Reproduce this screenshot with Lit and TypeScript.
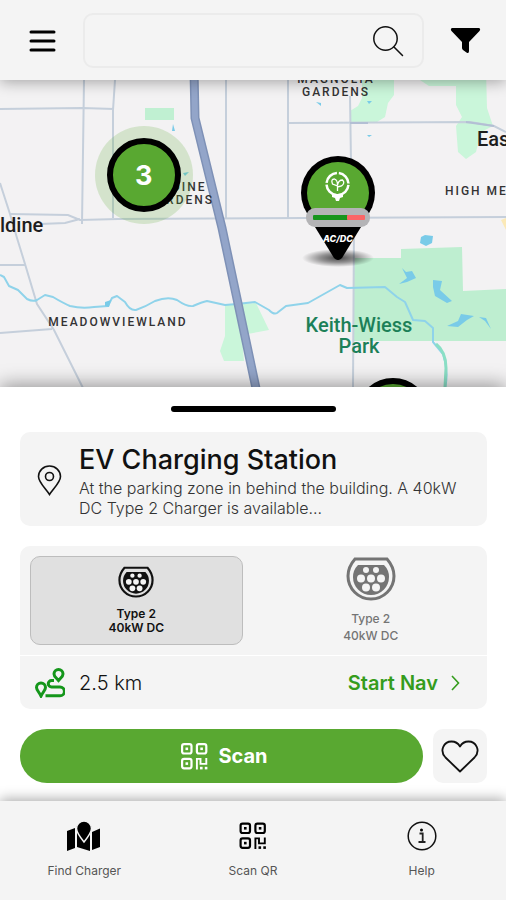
import { LitElement, html, svg, css } from "lit";
import { customElement, property, state } from "lit/decorators.js";

const qrIcon = svg`
  <g fill="none" stroke="currentColor" stroke-width="2.2">
    <rect x="1.1" y="1.1" width="9.4" height="9.4" rx="2"/>
    <rect x="15.9" y="1.1" width="9.4" height="9.4" rx="2"/>
    <rect x="1.1" y="15.9" width="9.4" height="9.4" rx="2"/>
    <path d="M15.9 26.4V15.9h3.600v5h5.800v-6" stroke-width="1.900"/>
  </g>
  <g fill="currentColor">
    <rect x="4.5" y="4.5" width="2.6" height="2.6"/>
    <rect x="19.3" y="4.5" width="2.6" height="2.6"/>
    <rect x="4.5" y="19.3" width="2.6" height="2.6"/>
    <rect x="19" y="23.8" width="2.6" height="2.6"/>
    <rect x="23.8" y="23.8" width="2.6" height="2.6"/>
  </g>`;

@customElement("map-view")
class MapView extends LitElement {
  static styles = css`
    :host { display: block; position: relative; overflow: hidden; background: #f3f2f3; }
    .map { display: block; width: 100%; height: 100%; }
    .place { font-family: Roboto, "Liberation Sans", sans-serif; font-weight: 500; fill: #333; text-anchor: middle; }
    .area { font-size: 12px; letter-spacing: 2px; }
    .town { font-size: 20px; fill: #1d1d1d; }
    .park { font-size: 20px; fill: #1c8058; }
    .start { text-anchor: start; }
    .pin {
      position: absolute; transform: translate(-50%, -50%);
      border: 0; padding: 0; background: none; cursor: pointer; line-height: 0;
    }
    .cluster { display: grid; place-items: center; width: 98px; height: 98px; border-radius: 50%; background: #59a83133; }
    .disc {
      display: grid; place-items: center; box-sizing: border-box; width: 74px; height: 74px;
      border: 6px solid #000; border-radius: 50%; background: #59a831; color: #fff;
      font: 700 27px/27px Inter, sans-serif;
    }
    .tag { font: italic 800 9px Inter, sans-serif; fill: #fff; text-anchor: middle; }
  `;

  render() {
    return html`
      <svg class="map" viewBox="0 80 506 307" preserveAspectRatio="xMidYMid slice" role="img" aria-label="Map">
        <defs>
          <radialGradient id="ground"><stop offset="0" stop-opacity=".7"/><stop offset=".5" stop-opacity=".4"/><stop offset="1" stop-opacity="0"/></radialGradient>
        </defs>
        <g fill="#caf6da">
          <path fill="#c0f0d2" d="M145 108h29v12h-29z"/>
          <path d="M362 60h32v35l-6 8-3 14-8 5h-27v-11l8-5 4-8z"/>
          <path d="M405 70h81l1 38 6 18-12 6-5 20-10 7-8-7-2-26 6-9-6-12v-19h-27z"/>
          <path d="M225 305l31-2 13 27-27 5 2 26h-20l-4-10 5-15z"/>
        </g>
        <path fill="#beeed0" d="M354 258h47v-9l61-2 1 44 43-2v52H354z"/>
        <g fill="none" stroke="#c5cfdb" stroke-width="2">
          <path d="M84 80l-2 144M115 80l-2 30v108M0 109l82-1 32 1M226 80v138"/>
          <path d="M10 214l58 1 12 5 38-1 388-2M40 224l25-1 15-4"/>
          <path d="M0 183l10 31 7 24 8 26 12 40 17 26 29 58M0 265h25M0 333l52-4"/>
          <path d="M288 80v138M350 96l1 66M354 225l-1 162M288 123l182-1 24 4 12 6"/>
        </g>
        <path fill="none" stroke="#b3bfd4" stroke-width="2" d="M350 123h18M466 122l28 4"/>
        <path fill="none" stroke="#8fd3ea" stroke-width="2" stroke-linejoin="round" d="M0 275l4 2 5 9 9 4 9 9q6 3 10 1l8-5 8 2q10 6 17 9 12 3 24 1l14-1 4-8 5-2 8 6q5 9 11 8 9-3 19-9 13-5 22-1 10 7 16 6 9-4 14-5l18 4 12-1 18-2 14 8q5 5 8 3l9-7 22-3 32-18 7 3 38-1 12 10 8 5 8 18 12 1 8 7v14l10 12q6 17 2 34"/>
        <path fill="none" stroke="#8adfc5" stroke-width="3" d="M436 344q10 8 10 24l-1 19"/>
        <g fill="#79cbe8">
          <path d="M421 237l4-2 8 1-1 7-6 3-6-3zM402 268l4 4 6-1 4 7-9 4-8 2 8-6zM433 280l9 1-2 9 12 11-5 2-12-7-2-9zM447 326l11-5 3-7 13 2-7 4-9 7zM479 317l7 1 5 11-6-8zM105 302l6-2-2 7-4-1zM173 124l2 7h-3zM183 173l6-1-4 4zM316 102l5 1v3zM367 101h5l-3 3zM367 135h5l-3 2z"/>
        </g>
        <g fill="none" stroke="#7e91b6" stroke-width="9">
          <path d="M194 70l1 48 27 110 35 165"/>
          <path stroke="#93a5c9" stroke-width="6" d="M194 70l1 48 27 110 35 165"/>
        </g>
        <path fill="#fbe9b7" d="M501 220l5-2v12z"/>
        <text class="place area" x="336" y="83">MAGNOLIA</text>
        <text class="place area" x="336" y="96">GARDENS</text>
        <text class="place area" x="180" y="191">ALDINE</text>
        <text class="place area" x="180" y="204">GARDENS</text>
        <text class="place area" x="118" y="326">MEADOWVIEWLAND</text>
        <text class="place area start" x="445" y="195">HIGH ME</text>
        <text class="place town start" x="0" y="232">ldine</text>
        <text class="place town start" x="477" y="146">Eas</text>
        <text class="place park" x="359" y="332">Keith-Wiess</text>
        <text class="place park" x="359" y="353">Park</text>
        <ellipse cx="338" cy="258" rx="36" ry="9" fill="url(#ground)"/>
      </svg>
      <button class="pin cluster" style="left:28.4%;top:31%" aria-label="3 chargers"><span class="disc">3</span></button>
      <button class="pin" style="left:77.7%;top:109%" aria-label="Charger"><span class="disc"></span></button>
      <button class="pin" style="left:66.8%;top:41.7%" aria-label="EV Charging Station">
        <svg width="76" height="106" viewBox="300 154 76 106">
          <path d="M307 212h62l-8 14-19 31q-4 4-8 0l-19-31z"/>
          <circle cx="338" cy="192" r="37"/>
          <circle cx="338" cy="192" r="31" fill="#59a831"/>
          <path d="M314 222h48l-24 37z"/>
          <circle cx="337.500" cy="183" r="11" fill="none" stroke="#fff" stroke-width="2.500" stroke-dasharray="15.300 2" stroke-dashoffset="-1"/>
          <g fill="none" stroke="#fff" stroke-width="1.300">
            <path d="M337.500 190v-5l-5-2q-2-5 2-5 3 1 3 6 1-5 5-5 3 3-1 6l-4 1"/>
          </g>
          <path fill="#fff" d="M332 193h11v3l-3 1-1 3h-3l-1-3-3-1z"/>
          <rect x="306" y="207" width="64" height="19" rx="9" fill="#b4b4b6"/>
          <rect x="313" y="214" width="35" height="5" rx="1" fill="#17951c"/>
          <rect x="347" y="214" width="18" height="5" rx="1" fill="#fb6666"/>
          <text class="tag" x="338" y="241">AC/DC</text>
        </svg>
      </button>`;
  }
}

@customElement("plug-option")
class PlugOption extends LitElement {
  @property({ type: Boolean, reflect: true }) selected = false;
  static styles = css`
    :host { display: flex; flex: 1; }
    .tile {
      flex: 1; display: flex; flex-direction: column; align-items: center; justify-content: center; gap: 8px;
      padding: 0; border: 1px solid transparent; border-radius: 10px; background: none; color: #747474;
      font: 500 12px/17px Inter, sans-serif; cursor: pointer;
    }
    .tile svg { flex: none; width: 50px; height: 45px; }
    .on { background: #e0e0e0; border-color: #bdbdbd; color: #111; font-weight: 600; line-height: 14px; }
    .tile.on svg { width: 36px; height: 33px; }
  `;
  render() {
    return html`<button class="tile ${this.selected ? "on" : ""}" aria-pressed=${this.selected}>
      <svg viewBox="0 0 50 45">
        <path d="M9 2h32q7 8 7 17a23 23 0 0 1-46 0Q2 10 9 2z" fill="none" stroke="currentColor" stroke-width="3"/>
        <path d="M12 8h26q5 5 5 12a18 18 0 0 1-36 0q0-7 5-12z" fill="currentColor"/>
        <g fill="#f4f4f4">
          <circle cx="20" cy="13" r="3"/><circle cx="30" cy="13" r="3"/>
          <circle cx="15" cy="21.500" r="4"/><circle cx="25" cy="21.500" r="4"/><circle cx="35" cy="21.500" r="4"/>
          <circle cx="20" cy="30.500" r="4"/><circle cx="30" cy="30.500" r="4"/>
        </g>
      </svg>
      <span>Type 2<br>40kW DC</span>
    </button>`;
  }
}

@customElement("app-root")
class AppRoot extends LitElement {
  @state() private plug = 0;
  static styles = css`
    :host { display: flex; flex-direction: column; min-height: 100vh; background: #fff; color: #111; font-family: Inter, "Liberation Sans", sans-serif; }
    * { box-sizing: border-box; }
    button { font-family: inherit; border: 0; padding: 0; background: none; color: inherit; cursor: pointer; }
    svg { display: block; flex: none; }
    .top { display: flex; align-items: center; gap: 26px; padding: 13px 25px 12px 28px; background: #f4f4f4; box-shadow: 0 2px 14px #0005; z-index: 2; }
    .search { flex: 1; min-width: 0; display: flex; align-items: center; height: 55px; padding: 0 18px; border: 2px solid #ebebeb; border-radius: 10px; }
    .field { flex: 1; min-width: 0; border: 0; outline: 0; background: none; font: 16px Inter, sans-serif; }
    .area { flex: 1; min-height: 240px; }
    .sheet { display: flex; flex-direction: column; gap: 20px; padding: 19px 19px 18px 20px; background: #fff; box-shadow: 0 -2px 18px #0006; z-index: 1; }
    .handle { width: 165px; height: 6px; border-radius: 3px; background: #000; align-self: center; }
    .info { display: flex; align-items: center; gap: 17px; min-height: 94px; padding: 11px 17px 8px; border-radius: 10px; background: #f4f4f4; }
    .title { margin: 0; font-size: 27px; line-height: 32px; font-weight: 500; }
    .desc { margin: 2px 0 0; font-size: 16px; line-height: 20px; font-weight: 300; color: #333; }
    .card { border-radius: 10px; background: #f4f4f4; }
    .plugs { display: flex; gap: 22px; height: 110px; padding: 10px; border-bottom: 1px solid #fff; }
    .route { display: flex; align-items: center; gap: 14px; height: 53px; padding: 0 26px 0 15px; font-size: 20px; font-weight: 300; }
    .dist { flex: 1; }
    .nav { display: flex; align-items: center; gap: 12px; color: #349c1c; font-size: 20px; font-weight: 600; text-decoration: none; }
    .actions { display: flex; gap: 10px; }
    .scan { flex: 1; display: flex; align-items: center; justify-content: center; gap: 10px; height: 54px; padding-left: 6px; border-radius: 27px; background: #59a831; color: #fff; font-size: 20px; font-weight: 700; }
    .fav { display: grid; place-items: center; width: 54px; height: 54px; border-radius: 10px; background: #f4f4f4; }
    .tabs { display: flex; height: 99px; background: #f4f4f4; box-shadow: 0 -2px 12px #0005; z-index: 2; }
    .tab { flex: 1; display: flex; flex-direction: column; align-items: center; gap: 10px; padding-top: 18px; color: #000; text-decoration: none; font-size: 12px; line-height: 16px; }
    .tab span { color: #555; }
  `;

  render() {
    return html`
      <header class="top">
        <button aria-label="Menu"><svg width="29" height="28" viewBox="28 27 29 28"><path d="M31 32h23M31 41h23M31 50h23" stroke="#000" stroke-width="3" stroke-linecap="round"/></svg></button>
        <label class="search">
          <input class="field" type="text" aria-label="Search">
          <svg width="32" height="32" viewBox="0 0 32 32" fill="none" stroke="#111" stroke-width="1.500" stroke-linecap="round"><circle cx="13.500" cy="13.500" r="11.700"/><path d="M22 22l8.500 8.500"/></svg>
        </label>
        <button aria-label="Filter"><svg width="31" height="27" viewBox="0 0 31 27"><path d="M2 1h27q2 1 .5 3L19 15v9q0 3-2.500 1.500L13 23q-1-1-1-2v-6L1.500 4Q0 2 2 1z"/></svg></button>
      </header>
      <map-view class="area"></map-view>
      <main class="sheet">
        <div class="handle"></div>
        <section class="info">
          <svg width="25" height="31" viewBox="0 0 25 31" fill="none" stroke="#111" stroke-width="1.600"><path d="M12.500 29.500C8 23 1.500 17 1.500 11.500a11 10.500 0 0 1 22 0C23.500 17 17 23 12.500 29.500z"/><circle cx="12.500" cy="11.500" r="4"/></svg>
          <div>
            <h1 class="title">EV Charging Station</h1>
            <p class="desc">At the parking zone in behind the building. A 40kW DC Type 2 Charger is available...</p>
          </div>
        </section>
        <section class="card">
          <div class="plugs">
            ${[0, 1].map((i) => html`<plug-option ?selected=${this.plug === i} @click=${() => (this.plug = i)}></plug-option>`)}
          </div>
          <div class="route">
            <svg width="30" height="30" viewBox="0 0 30 30" fill="none" stroke="#14961a" stroke-width="3">
              <path d="M6 28C4 24 1.500 22 1.500 19.500a4.500 4.500 0 0 1 9 0C10.500 22 8 24 6 28z"/>
              <path d="M23.500 12.500C21 9.500 19 8.500 19 6a4.500 4.500 0 0 1 9 0c0 2.500-2 3.500-4.500 6.500z"/>
              <path d="M19 12.500h-2.500a3.200 3.200 0 0 0 0 6.500H25a4.200 4.200 0 0 1 0 8.800H10.500"/>
            </svg>
            <span class="dist">2.5 km</span>
            <a class="nav" href="#nav">Start Nav
              <svg width="11" height="16" viewBox="0 0 11 16" fill="none" stroke="currentColor" stroke-width="1.600"><path d="M2 1l6.500 7L2 15"/></svg>
            </a>
          </div>
        </section>
        <div class="actions">
          <button class="scan"><svg width="27" height="27" viewBox="0 0 27 27">${qrIcon}</svg>Scan</button>
          <button class="fav" aria-label="Favourite"><svg width="38" height="33" viewBox="0 0 38 33" fill="none" stroke="#111" stroke-width="1.800" stroke-linejoin="round"><path d="M19 31.500L4.500 17.500C-2 10.500 3 1.500 10.500 1.500c4 0 6.500 1.500 8.500 5 2-3.500 4.500-5 8.500-5C35 1.500 40 10.500 33.500 17.500z"/></svg></button>
        </div>
      </main>
      <nav class="tabs">
        <a class="tab" href="#find"><svg width="34" height="34" viewBox="0 0 34 34">
          <path d="M0 12l8-3v20l-8 3zM10 10l1 1q2 7 6 10 4-3 6-10v21l-13-4zM25 13l8-3.500V28l-8 3z"/>
          <path d="M17 23C13 18 9.500 13.500 9.500 9.500a7.500 7.500 0 0 1 15 0C24.500 13.500 21 18 17 23z" stroke="#f4f4f4" stroke-width="1.500"/>
        </svg><span>Find Charger</span></a>
        <a class="tab" href="#scan"><svg width="34" height="34" viewBox="-3.500 -3.500 34 34">${qrIcon}</svg><span>Scan QR</span></a>
        <a class="tab" href="#help"><svg width="34" height="34" viewBox="0 0 34 34"><circle cx="17" cy="17" r="13.800" fill="none" stroke="#111" stroke-width="1.500"/><path d="M14.500 14.500h3.200v8.500M13.500 23h7" fill="none" stroke="#222" stroke-width="1.800"/><circle cx="16.500" cy="11" r="1.500"/></svg><span>Help</span></a>
      </nav>`;
  }
}
